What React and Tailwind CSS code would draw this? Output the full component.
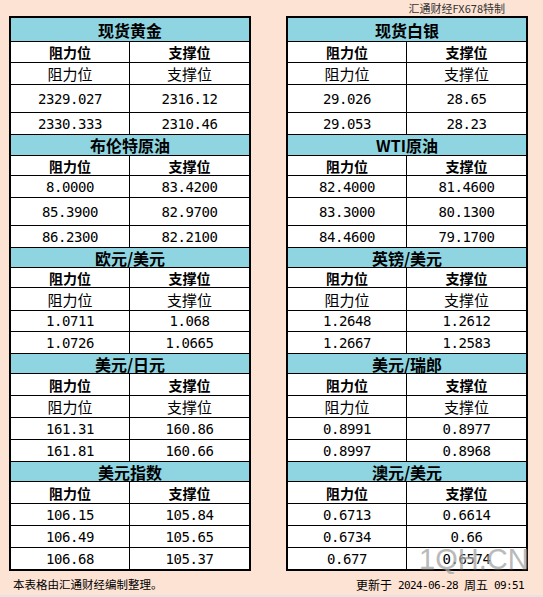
import React from "react";

const sections = [
  { titleH: "h-[24px]", headH: "h-[21px]", rowH: ["h-[22px]", "h-[28px]", "h-[22px]"] },
  { titleH: "h-[21px]", headH: "h-[20px]", rowH: ["h-[22px]", "h-[28px]", "h-[22px]"] },
  { titleH: "h-[20px]", headH: "h-[20px]", rowH: ["h-[23px]", "h-[21px]", "h-[22px]"] },
  { titleH: "h-[20px]", headH: "h-[22px]", rowH: ["h-[22px]", "h-[22px]", "h-[22px]"] },
  { titleH: "h-[20px]", headH: "h-[22px]", rowH: ["h-[22px]", "h-[22px]", "h-[21px]"] },
];

const left = [
  { title: "现货黄金", rows: [["阻力位", "支撑位"], ["2329.027", "2316.12"], ["2330.333", "2310.46"]] },
  { title: "布伦特原油", rows: [["8.0000", "83.4200"], ["85.3900", "82.9700"], ["86.2300", "82.2100"]] },
  { title: "欧元/美元", rows: [["阻力位", "支撑位"], ["1.0711", "1.068"], ["1.0726", "1.0665"]] },
  { title: "美元/日元", rows: [["阻力位", "支撑位"], ["161.31", "160.86"], ["161.81", "160.66"]] },
  { title: "美元指数", rows: [["106.15", "105.84"], ["106.49", "105.65"], ["106.68", "105.37"]] },
];

const right = [
  { title: "现货白银", rows: [["阻力位", "支撑位"], ["29.026", "28.65"], ["29.053", "28.23"]] },
  { title: "WTI原油", rows: [["82.4000", "81.4600"], ["83.3000", "80.1300"], ["84.4600", "79.1700"]] },
  { title: "英镑/美元", rows: [["阻力位", "支撑位"], ["1.2648", "1.2612"], ["1.2667", "1.2583"]] },
  { title: "美元/瑞郎", rows: [["阻力位", "支撑位"], ["0.8991", "0.8977"], ["0.8997", "0.8968"]] },
  { title: "澳元/美元", rows: [["0.6713", "0.6614"], ["0.6734", "0.66"], ["0.677", "0.6574"]] },
];

const cn = "font-['Noto_Sans_CJK_SC',sans-serif]";
const mono = "font-['DejaVu_Sans_Mono',monospace] text-[14px] tracking-[-0.43px]";
const smallMono = "font-['DejaVu_Sans_Mono',monospace] text-[11px] tracking-[-0.62px]";

function Cell({ text, first }) {
  const isCn = /[\u4e00-\u9fff]/.test(text);
  return (
    <div
      className={
        "flex items-center justify-center leading-none " +
        (first ? "w-[119px] border-r border-black " : "flex-1 ") +
        (isCn ? cn + " text-[15px]" : mono)
      }
    >
      {text}
    </div>
  );
}

function Table({ data }) {
  return (
    <div className="w-[242px] border-2 border-black bg-white text-black">
      {data.map((sec, si) => {
        const s = sections[si];
        const lastSec = si === data.length - 1;
        return (
          <div key={si}>
            <div
              className={
                "flex items-center justify-center bg-[#8ed5e1] border-b border-black font-bold text-[16px] leading-none " +
                cn +
                " " +
                s.titleH
              }
            >
              {sec.title}
            </div>
            <div className={"flex border-b border-black font-bold text-[14px] leading-none " + cn + " " + s.headH}>
              <div className="w-[119px] border-r border-black flex items-center justify-center">阻力位</div>
              <div className="flex-1 flex items-center justify-center">支撑位</div>
            </div>
            {sec.rows.map((r, ri) => {
              const lastRow = lastSec && ri === sec.rows.length - 1;
              return (
                <div key={ri} className={"flex " + s.rowH[ri] + (lastRow ? "" : " border-b border-black")}>
                  <Cell text={r[0]} first />
                  <Cell text={r[1]} />
                </div>
              );
            })}
          </div>
        );
      })}
    </div>
  );
}

export default function App() {
  return (
    <div className="relative w-[543px] h-[597px] bg-[#fde3d3] flex flex-col overflow-hidden">
      <div className={"h-[16px] flex items-start justify-end pr-[38px] pt-[2px] text-[11px] leading-[12px] text-[#333] " + cn}>
        汇通财经FX678特制
      </div>
      <div className="flex gap-[35px] pl-[9px]">
        <Table data={left} />
        <Table data={right} />
      </div>
      <div className={"flex-1 flex items-center justify-between pl-[13px] pr-[19px] pt-[4px] leading-none text-black " + cn}>
        <span className="text-[11.5px]">本表格由汇通财经编制整理。</span>
        <div className="flex items-center gap-[6px] text-[12px]">
          <span>更新于</span>
          <span className={smallMono}>2024-06-28</span>
          <span>周五</span>
          <span className={smallMono}>09:51</span>
        </div>
      </div>
      <div className="h-[2px] bg-[#e4e4e4]" />
      <div className="absolute left-[419px] top-[545px] font-['Liberation_Sans',sans-serif] text-[29px] leading-none text-[#a3a3a3] opacity-75 pointer-events-none [text-shadow:0_0_2px_#ffffff]">
        1QH.CN
      </div>
    </div>
  );
}
